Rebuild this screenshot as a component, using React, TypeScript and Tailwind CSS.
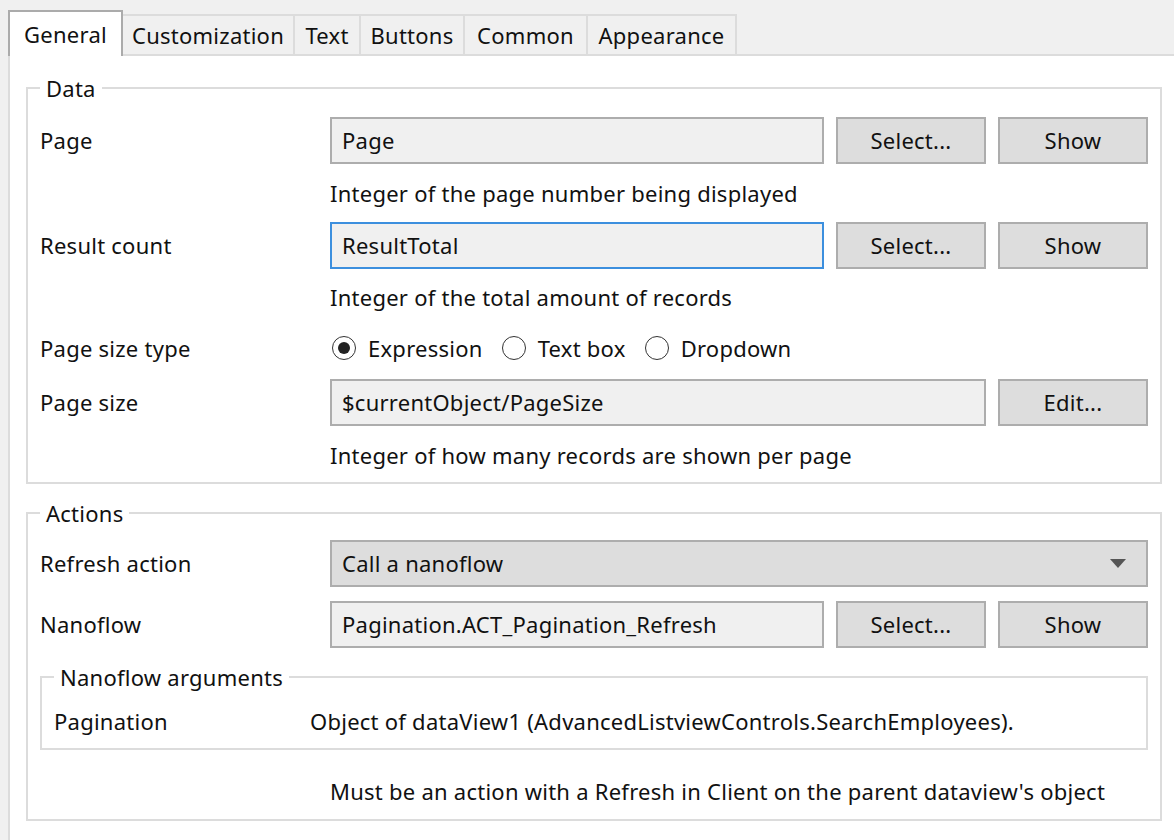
import React from "react";

const font = { fontFamily: '"Noto Sans", "Open Sans", sans-serif' };

const tabs = [
  { label: "Customization", w: "w-[172px]" },
  { label: "Text", w: "w-[66px]" },
  { label: "Buttons", w: "w-[104px]" },
  { label: "Common", w: "w-[123px]" },
  { label: "Appearance", w: "w-[149px]" },
];

function Btn({ children }: { children: React.ReactNode }) {
  return (
    <button className="ml-[12px] w-[150px] h-[47px] shrink-0 border-2 border-[#adadad] bg-[#dddddd] text-[22px] text-[#111] tracking-[0.25px]">
      {children}
    </button>
  );
}

function Field({ value, focused }: { value: string; focused?: boolean }) {
  return (
    <div
      className={
        "flex-1 h-[47px] flex items-center px-[10px] bg-[#f0f0f0] border-2 " +
        (focused ? "border-[#3c8fde]" : "border-[#adadad]")
      }
    >
      {value}
    </div>
  );
}

function Row({ label, children }: { label: string; children: React.ReactNode }) {
  return (
    <div className="flex items-center">
      <div className="w-[290px] shrink-0">{label}</div>
      {children}
    </div>
  );
}

function Hint({ children, className = "" }: { children: React.ReactNode; className?: string }) {
  return <div className={"pl-[290px] h-[30px] leading-[30px] " + className}>{children}</div>;
}

function Radio({ label, checked }: { label: string; checked?: boolean }) {
  return (
    <div className="flex items-center mr-[19px]">
      <span className="w-[24px] h-[24px] rounded-full border-[1.5px] border-[#333] flex items-center justify-center mr-[12px]">
        {checked && <span className="w-[12px] h-[12px] rounded-full bg-[#222]" />}
      </span>
      {label}
    </div>
  );
}

export default function App() {
  return (
    <div
      className="w-[1174px] h-[840px] overflow-hidden bg-[#f0f0f0] text-[22px] text-[#111] tracking-[0.25px]"
      style={font}
    >
      {/* Tab strip */}
      <div className="flex items-end pl-[8px] pt-[10px]">
        <div className="relative z-10 -mb-[2px] w-[115px] h-[46px] border-2 border-b-0 border-[#ababab] bg-white flex items-center justify-center">
          General
        </div>
        {tabs.map((t) => (
          <div
            key={t.label}
            className={t.w + " h-[40px] border-t-2 border-r-2 border-[#dcdcdc] bg-[#f0f0f0] flex items-center justify-center"}
          >
            {t.label}
          </div>
        ))}
      </div>

      {/* Panel */}
      <div className="ml-[8px] h-[800px] border-t-2 border-l-2 border-[#dcdcdc] bg-white pl-[16px] pr-[12px]">
        <fieldset className="mt-[17px] border-2 border-[#dcdcdc] px-[12px] pb-[12px]">
          <legend className="px-[6px] leading-[30px]">Data</legend>
          <div className="mt-[14px]">
            <Row label="Page">
              <Field value="Page" />
              <Btn>Select...</Btn>
              <Btn>Show</Btn>
            </Row>
          </div>
          <Hint className="mt-[14px]">Integer of the page number being displayed</Hint>
          <div className="mt-[14px]">
            <Row label="Result count">
              <Field value="ResultTotal" focused />
              <Btn>Select...</Btn>
              <Btn>Show</Btn>
            </Row>
          </div>
          <Hint className="mt-[13px]">Integer of the total amount of records</Hint>
          <div className="mt-[21px] flex items-center h-[30px]">
            <div className="w-[290px] shrink-0">Page size type</div>
            <div className="flex items-center pl-[2px]">
              <Radio label="Expression" checked />
              <Radio label="Text box" />
              <Radio label="Dropdown" />
            </div>
          </div>
          <div className="mt-[16px]">
            <Row label="Page size">
              <Field value="$currentObject/PageSize" />
              <Btn>Edit...</Btn>
            </Row>
          </div>
          <Hint className="mt-[14px]">Integer of how many records are shown per page</Hint>
        </fieldset>

        <fieldset className="mt-[14px] border-2 border-[#dcdcdc] px-[12px] pb-[13px]">
          <legend className="px-[6px] leading-[30px]">Actions</legend>
          <div className="mt-[12px]">
            <Row label="Refresh action">
              <div className="flex-1 h-[47px] flex items-center justify-between px-[10px] bg-[#dddddd] border-2 border-[#adadad]">
                <span>Call a nanoflow</span>
                <svg width="16" height="9" viewBox="0 0 16 9" className="mr-[10px]">
                  <path d="M0 0 H16 L8 9 Z" fill="#555" />
                </svg>
              </div>
            </Row>
          </div>
          <div className="mt-[14px]">
            <Row label="Nanoflow">
              <Field value="Pagination.ACT_Pagination_Refresh" />
              <Btn>Select...</Btn>
              <Btn>Show</Btn>
            </Row>
          </div>
          <fieldset className="mt-[14px] border-2 border-[#dcdcdc] px-[12px] pb-[12px]">
            <legend className="px-[6px] leading-[30px]">Nanoflow arguments</legend>
            <div className="flex items-center h-[30px] mt-[14px]">
              <div className="w-[256px] shrink-0">Pagination</div>
              <div>Object of dataView1 (AdvancedListviewControls.SearchEmployees).</div>
            </div>
          </fieldset>
          <Hint className="mt-[26px]">Must be an action with a Refresh in Client on the parent dataview's object</Hint>
        </fieldset>
      </div>
    </div>
  );
}
